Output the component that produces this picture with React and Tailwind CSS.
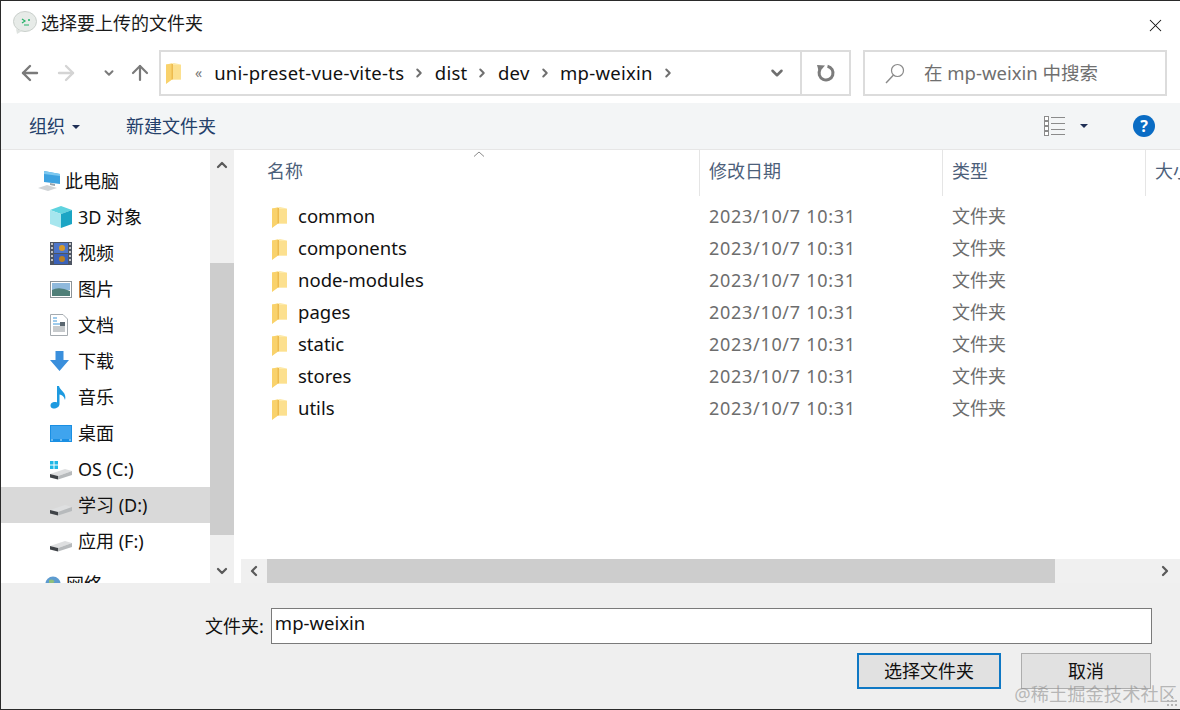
import { ArrowLeft, ArrowRight, ArrowUp, ChevronDown, ChevronLeft, ChevronRight, ChevronUp, X } from 'lucide-react';

const FONT = "font-['Noto_Sans','Noto_Sans_CJK_SC',sans-serif]";

// ── Icons ─────────────────────────────────────────────
function Folder({ className = '' }) {
  return (
    <svg width="15" height="21" viewBox="0 0 15 21" className={className}>
      <path d="M0 1.5 L8 0 L15 1.5 V16.5 H6 L0 20.5 Z" fill="#fde9a8" />
      <path d="M7 2 H15 V16.5 H7 Z" fill="#fce08f" />
      <path d="M0 1.5 L6 0.5 V16.5 L0 21 Z" fill="#f9d26c" />
      <path d="M5.5 1 H7 V16.5 H5.5 Z" fill="#edbb4f" />
    </svg>
  );
}

function WeChatLogo() {
  return (
    <svg width="26" height="24" viewBox="0 0 26 24">
      <ellipse cx="13" cy="10.5" rx="11.5" ry="10" fill="#e7ebe8" stroke="#c9cfcb" />
      <path d="M4 18 L5 23 L10 20 Z" fill="#dfe3e0" />
      <path d="M10 8 L13 10 L10 12" fill="none" stroke="#27b36a" strokeWidth="1.2" />
      <circle cx="17" cy="9" r="1" fill="#27b36a" />
      <path d="M12 14 H17" stroke="#27b36a" strokeWidth="1" />
    </svg>
  );
}

function PcIcon() {
  return (
    <svg width="24" height="22" viewBox="0 0 24 22">
      <path d="M7 1 L23 4 V14 L7 12 Z" fill="#3da2e0" />
      <path d="M7 1 L23 4 V6 L7 4 Z" fill="#7cc8f0" />
      <path d="M13 13 L18 14 V16 L13 15 Z" fill="#9aa5ad" />
      <path d="M1 18 L10 15 L20 18 L11 21 Z" fill="#cfd3d6" />
    </svg>
  );
}

function CubeIcon() {
  return (
    <svg width="22" height="22" viewBox="0 0 22 22">
      <path d="M11 0 L22 4 L11 8 L0 4 Z" fill="#5fd3df" />
      <path d="M0 4 L11 8 V22 L0 18 Z" fill="#a6e6ee" />
      <path d="M11 8 L22 4 V18 L11 22 Z" fill="#1ba5c4" />
    </svg>
  );
}

function VideoIcon() {
  return (
    <svg width="22" height="23" viewBox="0 0 22 23">
      <rect width="22" height="23" fill="#4d5563" />
      <rect x="4" y="1" width="14" height="10" fill="#4d76c9" />
      <rect x="4" y="12" width="14" height="10" fill="#3b62b8" />
      <circle cx="12" cy="6" r="3" fill="#d69a2b" />
      <circle cx="12" cy="17" r="3" fill="#b87f22" />
      <path d="M1 2h2M1 6h2M1 10h2M1 14h2M1 18h2M19 2h2M19 6h2M19 10h2M19 14h2M19 18h2" stroke="#e6e6e6" strokeWidth="1.5" />
    </svg>
  );
}

function PictureIcon() {
  return (
    <svg width="22" height="17" viewBox="0 0 22 17">
      <rect x="0.5" y="0.5" width="21" height="16" fill="#fff" stroke="#8d9499" />
      <rect x="2" y="2" width="18" height="7" fill="#8fb9dc" />
      <path d="M2 9 Q9 5 20 10 V15 H2 Z" fill="#4f7f78" />
    </svg>
  );
}

function DocIcon() {
  return (
    <svg width="18" height="22" viewBox="0 0 18 22">
      <path d="M0.5 0.5 H13 L17.5 5 V21.5 H0.5 Z" fill="#fff" stroke="#a5abb0" />
      <path d="M3 4 H7 M3 7 H7 M3 10 H15" stroke="#3c96d8" />
      <path d="M3 13 H15 M3 15 H15 M3 17 H15" stroke="#8d9499" />
      <rect x="10" y="8" width="5" height="4" fill="#5b6770" />
    </svg>
  );
}

function DownloadIcon() {
  return (
    <svg width="19" height="20" viewBox="0 0 19 20">
      <path d="M5.5 0 H13.5 V9 H19 L9.5 20 L0 9 H5.5 Z" fill="#3a8fdc" />
    </svg>
  );
}

function MusicIcon() {
  return (
    <svg width="17" height="23" viewBox="0 0 17 23">
      <path d="M7 0 H9 C10 5 17 6 15 14 C14 10 12 9 9.5 8.5 V18 C9.5 21 6 23 3 22.5 C0 22 -0.5 18 2.5 16.5 C4 16 6 15.8 7 16.5 Z" fill="#1d9ae0" />
    </svg>
  );
}

function DesktopIcon() {
  return (
    <svg width="22" height="17" viewBox="0 0 22 17">
      <rect width="22" height="17" fill="#1a8fe3" />
      <rect x="1" y="1" width="20" height="13" fill="#3fa4ee" />
      <path d="M1 15 H21" stroke="#c9e6fa" strokeWidth="1" strokeDasharray="2 7" />
    </svg>
  );
}

function DriveIcon({ windows = false }) {
  return (
    <svg width="23" height="19" viewBox="0 0 23 19" className="mt-[3px]">
      {windows && (
        <g fill="#1fb8e6">
          <rect x="0" y="0" width="3.5" height="3.5" />
          <rect x="4.5" y="0" width="3.5" height="3.5" />
          <rect x="0" y="4.5" width="3.5" height="3.5" />
          <rect x="4.5" y="4.5" width="3.5" height="3.5" />
        </g>
      )}
      <path d="M0 13 L15 8 L22 10 L8 15 Z" fill="#dedfe0" />
      <path d="M0 13 L8 15 V18.5 L0 16.5 Z" fill="#3f4347" />
      <path d="M8 15 L22 10 V14 L8 18.5 Z" fill="#b7babc" />
    </svg>
  );
}

function GlobeIcon() {
  return (
    <svg width="16" height="16" viewBox="0 0 20 20">
      <circle cx="10" cy="10" r="9.5" fill="#5d9bd0" />
      <path d="M5 5 Q10 3 12 7 Q9 11 5 9 Z" fill="#8fbf7a" />
    </svg>
  );
}

function ViewIcon() {
  return (
    <svg width="22" height="22" viewBox="0 0 22 22">
      <g fill="#fff" stroke="#8b8b8b">
        <rect x="0.5" y="1.5" width="4" height="4" />
        <rect x="0.5" y="6.5" width="4" height="4" />
        <rect x="0.5" y="11.5" width="4" height="4" />
        <rect x="0.5" y="16.5" width="4" height="4" />
      </g>
      <path d="M7 2.5 H21 M7 8.5 H21 M7 14.5 H21 M7 19.5 H21" stroke="#8b8b8b" />
    </svg>
  );
}

function RefreshIcon() {
  return (
    <svg width="20" height="20" viewBox="0 0 20 20">
      <path d="M11.5 3.2 A7 7 0 1 1 4 6.5" fill="none" stroke="#7c7c7c" strokeWidth="3" />
      <path d="M1 2 L9 2.5 L3 9.5 Z" fill="#7c7c7c" />
    </svg>
  );
}

function SearchIcon({ className = '' }) {
  return (
    <svg width="20" height="21" viewBox="0 0 20 21" className={className}>
      <circle cx="12.5" cy="7.5" r="6" fill="none" stroke="#8a8a8a" strokeWidth="1.2" />
      <path d="M8.5 12 L1 20" stroke="#8a8a8a" strokeWidth="1.4" />
    </svg>
  );
}

function WatermarkDots() {
  return (
    <svg width="10" height="10" viewBox="0 0 10 10" className="absolute right-[3px] bottom-[3px]">
      <path d="M4 0h2v2H4zM0 4h2v2H0zM4 4h2v2H4zM8 4h2v2H8zM0 8h2v2H0zM4 8h2v2H4zM8 8h2v2H8z" fill="#b5b5b5" />
    </svg>
  );
}

function Caret({ color = '#1f2f55' }) {
  return <span className="inline-block w-0 h-0 border-x-[4px] border-x-transparent border-t-[4px]" style={{ borderTopColor: color }} />;
}

// ── Data ──────────────────────────────────────────────
const NAV = [
  { icon: <CubeIcon />, label: '3D 对象' },
  { icon: <VideoIcon />, label: '视频' },
  { icon: <PictureIcon />, label: '图片' },
  { icon: <DocIcon />, label: '文档' },
  { icon: <DownloadIcon />, label: '下载' },
  { icon: <MusicIcon />, label: '音乐' },
  { icon: <DesktopIcon />, label: '桌面' },
  { icon: <DriveIcon windows />, label: 'OS (C:)' },
  { icon: <DriveIcon />, label: '学习 (D:)', selected: true },
  { icon: <DriveIcon />, label: '应用 (F:)' },
];

const FILES = ['common', 'components', 'node-modules', 'pages', 'static', 'stores', 'utils'];
const CRUMBS = ['uni-preset-vue-vite-ts', 'dist', 'dev', 'mp-weixin'];

function ColumnHead({ label, width }) {
  return (
    <div className="h-[46px] shrink-0 border-r border-[#e5e5e5] pl-[9px] pt-[8px] text-[#4c607a] overflow-hidden whitespace-nowrap" style={{ width }}>
      {label}
    </div>
  );
}

export default function App() {
  return (
    <div className={`${FONT} w-[1180px] h-[710px] flex flex-col bg-white text-[18px] leading-[26px] text-[#111] border-l border-t border-b border-[#2a2a2a] overflow-hidden relative`}>
      {/* Title bar */}
      <div className="h-[44px] shrink-0 flex items-center pl-[11px] pr-[14px]">
        <WeChatLogo />
        <span className="ml-[3px] text-[#1a1a1a]">选择要上传的文件夹</span>
        <X size={21} strokeWidth={1.2} className="ml-auto mt-[4px] text-[#111]" />
      </div>

      {/* Address row */}
      <div className="mt-[5px] h-[46px] shrink-0 flex items-center">
        <div className="w-[158px] shrink-0 flex items-center pl-[17px] text-[#7a7a7a]">
          <ArrowLeft size={24} strokeWidth={2.4} />
          <ArrowRight size={24} strokeWidth={2.4} className="ml-[12px] text-[#d4d4d4]" />
          <ChevronDown size={14} strokeWidth={3.4} className="ml-[24px]" />
          <ArrowUp size={24} strokeWidth={2.2} className="ml-[12px]" />
        </div>
        <div className="w-[692px] h-[46px] shrink-0 border-2 border-[#dcdcdc] flex items-center">
          <Folder className="ml-[5px]" />
          <span className="ml-[14px] text-[#777] text-[14px]">«</span>
          <div className="flex items-center text-[18.5px] tracking-[0.25px]">
            {CRUMBS.map((c, i) => (
              <div key={c} className="flex items-center">
                <span className={i === 0 ? 'ml-[12px]' : 'ml-[8.5px]'}>{c}</span>
                <ChevronRight size={14} strokeWidth={3.4} className="ml-[8px] text-[#6f6f6f]" />
              </div>
            ))}
          </div>
          <ChevronDown size={18} strokeWidth={3.4} className="ml-auto mr-[14px] text-[#6f6f6f]" />
          <div className="w-[49px] h-full border-l-2 border-[#dcdcdc] flex items-center justify-center">
            <RefreshIcon />
          </div>
        </div>
        <div className="ml-[12px] w-[304px] h-[46px] shrink-0 border-2 border-[#dcdcdc] flex items-center text-[#6f6f6f]">
          <SearchIcon className="ml-[20px]" />
          <span className="ml-[19px] text-[18.5px]">在 mp-weixin 中搜索</span>
        </div>
      </div>

      {/* Toolbar */}
      <div className="mt-[7px] h-[47px] shrink-0 bg-[#f3f5f6] border-b border-[#e6e6e6] flex items-center text-[#24406a]">
        <span className="ml-[28px]">组织</span>
        <span className="ml-[7px] mt-[1px] flex"><Caret /></span>
        <span className="ml-[46px]">新建文件夹</span>
        <div className="ml-auto flex items-center">
          <ViewIcon />
          <span className="ml-[14px] flex"><Caret /></span>
          <span className="ml-[45px] mr-[25px] w-[22px] h-[22px] rounded-full bg-[#0a6cc4] text-white text-[16px] font-bold flex items-center justify-center">?</span>
        </div>
      </div>

      {/* Main */}
      <div className="h-[433px] shrink-0 flex">
        {/* Sidebar */}
        <div className="w-[209px] shrink-0 overflow-hidden pt-[13px]">
          <div className="h-[36px] flex items-center pl-[36px] gap-[4px]">
            <PcIcon />
            <span>此电脑</span>
          </div>
          {NAV.map((n) => (
            <div key={n.label} className={`h-[36px] flex items-center pl-[49px] ${n.selected ? 'bg-[#d9d9d9]' : ''}`}>
              <span className="w-[28px] flex items-center justify-start">{n.icon}</span>
              <span>{n.label}</span>
            </div>
          ))}
          <div className="h-[36px] mt-[7px] flex items-center pl-[44px] gap-[5px]">
            <GlobeIcon />
            <span>网络</span>
          </div>
        </div>

        {/* Sidebar scrollbar */}
        <div className="w-[24px] shrink-0 bg-[#f0f0f0] flex flex-col items-center text-[#5a5a5a]">
          <div className="h-[30px] flex items-center justify-center"><ChevronUp size={16} strokeWidth={3.4} /></div>
          <div className="w-full h-[83px]" />
          <div className="w-full h-[272px] bg-[#cdcdcd]" />
          <div className="flex-1 w-full flex items-end justify-center">
            <div className="h-[24px] flex items-center"><ChevronDown size={16} strokeWidth={3.4} /></div>
          </div>
        </div>
        <div className="w-[7px] shrink-0" />

        {/* File list */}
        <div className="flex-1 min-w-0 flex flex-col relative">
          <div className="h-[46px] shrink-0 flex overflow-hidden">
            <div className="w-[459px] shrink-0 h-[46px] border-r border-[#e5e5e5] pl-[26px] pt-[8px] text-[#4c607a]">名称</div>
            <ColumnHead label="修改日期" width={243} />
            <ColumnHead label="类型" width={203} />
            <ColumnHead label="大小" width={60} />
          </div>
          <svg width="12" height="6" viewBox="0 0 12 6" className="absolute left-[232px] top-[1px]">
            <path d="M1 5.5 L6 1 L11 5.5" fill="none" stroke="#8a8a8a" />
          </svg>

          <div className="flex-1 min-h-0 pt-[4px]">
            {FILES.map((f) => (
              <div key={f} className="h-[32px] flex items-center">
                <Folder className="ml-[31px] mt-[2px]" />
                <span className="ml-[11px] w-[411px] text-[18.5px]">{f}</span>
                <span className="w-[243px] text-[#6d6d6d] tracking-[0.7px]">2023/10/7 10:31</span>
                <span className="text-[#6d6d6d]">文件夹</span>
              </div>
            ))}
          </div>

          {/* Horizontal scrollbar */}
          <div className="h-[24px] shrink-0 bg-[#f0f0f0] flex items-center text-[#5a5a5a]">
            <div className="w-[26px] flex justify-center"><ChevronLeft size={16} strokeWidth={3.4} /></div>
            <div className="w-[788px] h-full bg-[#cdcdcd]" />
            <div className="ml-auto w-[30px] flex justify-center"><ChevronRight size={16} strokeWidth={3.4} /></div>
          </div>
        </div>
      </div>

      {/* Footer */}
      <div className="flex-1 min-h-0 bg-[#efefef] relative">
        <div className="flex items-center mt-[25px] pl-[204px]">
          <span>文件夹:</span>
          <div className="ml-[7px] w-[881px] h-[36px] bg-white border border-[#7a7a7a] pl-[3px] flex items-center">
            <span className="-mt-[7px] text-[18.5px]">mp-weixin</span>
          </div>
        </div>
        <div className="flex justify-end mt-[9px] pr-[29px] gap-[20px]">
          <div className="w-[144px] h-[36px] bg-[#e1e1e1] border-2 border-[#0f78c4] flex items-center justify-center">选择文件夹</div>
          <div className="w-[130px] h-[36px] bg-[#e1e1e1] border border-[#adadad] flex items-center justify-center">取消</div>
        </div>
      </div>

      {/* Watermark */}
      <div className="absolute right-[3px] bottom-[5px] text-[#8f8f8f]/60 text-[18.3px] leading-[20px] pointer-events-none">@稀土掘金技术社区</div>
      <WatermarkDots />
    </div>
  );
}
